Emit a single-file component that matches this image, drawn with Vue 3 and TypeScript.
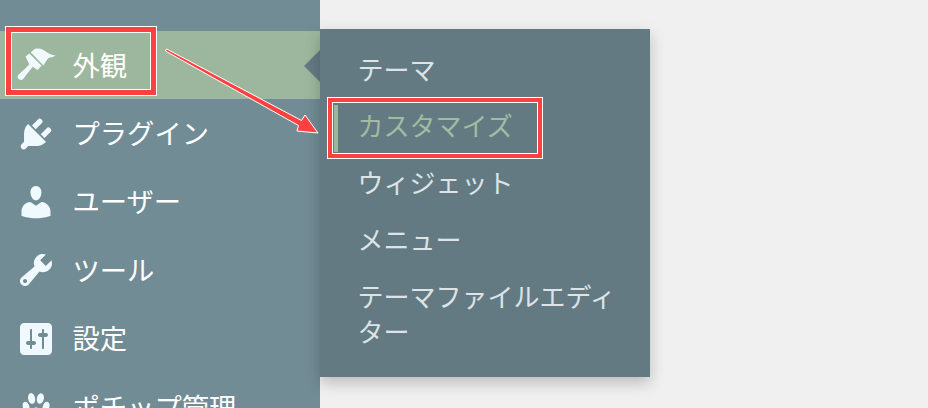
<script setup lang="ts">
interface MenuItem {
  label: string
  icon: string
  active?: boolean
}

const menu: MenuItem[] = [
  {
    label: '外観',
    active: true,
    icon: 'M7.4 3.6L9.3 2C10.6 1.6 12 1.7 13.2 2.2 15.2 3.2 17 5 19.9 5.3 18.6 6.2 17.2 6.2 16.2 6.5 15.2 7.6 14.6 9 13.7 10.3zM6.7 4.3L12.8 10.4 10.7 12.5 8.4 10.9C7 12.5 5.2 15 3.6 17 2.8 17.8 1.7 17.6 1.1 16.8.6 16 .8 15.2 1.5 14.6 3.2 13 5.4 11.2 6.6 9.6L4.8 5.8z'
  },
  {
    label: 'プラグイン',
    icon: 'M13.11 4.36L9.87 7.6 8 5.73l3.24-3.24c.35-.34 1.05-.2 1.56.32.52.51.66 1.21.31 1.55zm-8 1.77l.91-1.12 9.01 9.01-1.19.84c-.71.71-2.63 1.16-3.82 1.16H6.14L4.9 17.26c-.59.59-1.54.59-2.12 0-.59-.58-.59-1.53 0-2.12l1.24-1.24v-3.88c0-1.13.4-3.19 1.09-3.89zm7.26 3.97l3.24-3.24c.34-.35 1.04-.21 1.55.31.52.51.66 1.21.31 1.55l-3.24 3.25z'
  },
  {
    label: 'ユーザー',
    icon: 'M10 9.25c-2.27 0-2.73-3.44-2.73-3.44C7 4.02 7.82 2 9.97 2c2.16 0 2.98 2.02 2.71 3.81 0 0-.41 3.44-2.68 3.44zm0 2.57L12.72 10c2.39 0 4.52 2.33 4.52 4.53v2.49s-3.65 1.13-7.24 1.13c-3.65 0-7.24-1.13-7.24-1.13v-2.49c0-2.25 1.94-4.48 4.47-4.48z'
  },
  {
    label: 'ツール',
    icon: 'M16.68 9.77c-1.34 1.34-3.3 1.67-4.95.99l-5.41 6.52c-.99.99-2.59.99-3.58 0s-.99-2.59 0-3.57l6.52-5.42c-.68-1.65-.35-3.61.99-4.95 1.28-1.28 3.12-1.62 4.72-1.06l-2.89 2.89 2.82 2.82 2.86-2.87c.53 1.58.18 3.39-1.08 4.67zM3.81 16.21c.4.39 1.04.39 1.43 0 .4-.4.4-1.04 0-1.43-.39-.4-1.03-.4-1.43 0-.39.39-.39 1.03 0 1.43z'
  },
  {
    label: '設定',
    icon: 'M18 16V4c0-1.1-.9-2-2-2H4c-1.1 0-2 .9-2 2v12c0 1.1.9 2 2 2h12c1.1 0 2-.9 2-2zM8 11h1c.55 0 1 .45 1 1s-.45 1-1 1H8v1.5c0 .28-.22.5-.5.5s-.5-.22-.5-.5V13H6c-.55 0-1-.45-1-1s.45-1 1-1h1V5.5c0-.28.22-.5.5-.5s.5.22.5.5V11zm5-2h-1c-.55 0-1-.45-1-1s.45-1 1-1h1V5.5c0-.28.22-.5.5-.5s.5.22.5.5V7h1c.55 0 1 .45 1 1s-.45 1-1 1h-1v5.5c0 .28-.22.5-.5.5s-.5-.22-.5-.5V9z'
  },
  {
    label: 'ポチップ管理',
    icon: 'M11.9 8.4c1.3 0 2.1-1.9 2.1-3.1 0-1-.5-2.2-1.5-2.2-1.3 0-2.1 1.9-2.1 3.1 0 1 .5 2.2 1.5 2.2zm-3.8 0c1 0 1.5-1.2 1.5-2.2C9.6 4.9 8.8 3 7.5 3 6.5 3 6 4.2 6 5.2c0 1.3.8 3.2 2.1 3.2zm7.4-1c-1.3 0-2.2 1.8-2.2 3.1 0 .9.4 1.8 1.3 1.8 1.3 0 2.2-1.8 2.2-3.1 0-.9-.5-1.8-1.3-1.8zm-8.7 3.1c0-1.3-1-3.1-2.2-3.1-.9 0-1.3.9-1.3 1.8 0 1.3 1 3.1 2.2 3.1.9 0 1.3-.9 1.3-1.8zm3.2-.2c-2 0-4.7 3.2-4.7 5.4 0 1 .7 1.3 1.5 1.3 1.2 0 2.1-.8 3.2-.8 1 0 1.9.8 3 .8.8 0 1.7-.2 1.7-1.3 0-2.2-2.7-5.4-4.7-5.4z'
  }
]

const submenu = ['テーマ', 'カスタマイズ', 'ウィジェット', 'メニュー', 'テーマファイルエディター']
</script>

<template>
  <div class="page">
    <nav class="sidebar">
      <a v-for="item in menu" :key="item.label" class="row" :class="{ active: item.active }">
        <svg class="icon" viewBox="0 0 20 20" width="40" height="40">
          <path :d="item.icon" />
        </svg>
        <span class="row-text">{{ item.label }}</span>
      </a>
    </nav>

    <ul class="flyout">
      <li v-for="(name, i) in submenu" :key="name" class="sub" :class="{ current: i === 1 }">
        <span class="sub-text">{{ name }}</span>
      </li>
    </ul>

    <div class="mark mark-menu"></div>
    <div class="mark mark-sub"></div>
    <svg class="arrow" viewBox="0 0 928 408" width="928" height="408">
      <polygon
        points="166.6,49 301.5,120.5 305,115 318,133 297,131 298.5,125.5 165.4,51"
        fill="#ff4040"
        stroke="#ffffff"
        stroke-width="1"
        stroke-linejoin="round"
      />
    </svg>
  </div>
</template>

<style>
html,
body {
  margin: 0;
  background: #f0f0f0;
}
</style>

<style scoped>
.page {
  position: relative;
  display: flex;
  align-items: flex-start;
  width: 928px;
  height: 408px;
  overflow: hidden;
  background: #f0f0f0;
  font-family: "Noto Sans CJK JP", "Noto Sans", sans-serif;
}

.sidebar {
  flex: none;
  display: flex;
  flex-direction: column;
  width: 320px;
  height: 480px;
  padding-top: 31px;
  box-sizing: border-box;
  background: #728c95;
}

.row {
  position: relative;
  flex: none;
  display: flex;
  align-items: center;
  gap: 16.5px;
  height: 68.4px;
  padding-left: 16px;
  box-sizing: border-box;
  color: #ffffff;
  font-size: 27.3px;
  line-height: 36px;
  white-space: nowrap;
}

.row-text {
  padding-bottom: 3px;
}

.row.active {
  background: #9db79e;
}

.row.active::after {
  content: "";
  position: absolute;
  top: 19px;
  right: 0;
  border-style: solid;
  border-width: 16px 16px 16px 0;
  border-color: transparent #637a82 transparent transparent;
}

.icon {
  flex: none;
  fill: #f0fafe;
}

.flyout {
  flex: none;
  position: relative;
  width: 330px;
  margin: 29px 0 0;
  padding: 21.75px 0 28.5px;
  box-sizing: border-box;
  list-style: none;
  background: #637a82;
  box-shadow: 0 6px 14px rgba(0, 0, 0, 0.22);
}

.sub {
  margin: 0 0 21.2px 14px;
  padding-left: 23.5px;
  padding-right: 28px;
  color: #dde3e6;
  font-size: 26px;
  line-height: 35.5px;
}

.sub:last-child {
  margin-bottom: 0;
}

.sub.current {
  color: #a2bca2;
  position: relative;
}

.sub.current::before {
  content: "";
  position: absolute;
  left: 0;
  top: -2.5px;
  bottom: -9px;
  width: 4px;
  background: #9db79e;
}

.mark {
  position: absolute;
  box-sizing: border-box;
  border-style: solid;
  border-color: #ff4040;
  outline: 1px solid #ffffff;
  box-shadow: inset 0 0 0 1px #ffffff;
}

.mark-menu {
  left: 6px;
  top: 27px;
  width: 150px;
  height: 68px;
  border-width: 5px;
}

.mark-sub {
  left: 328px;
  top: 98px;
  width: 214px;
  height: 60px;
  border-width: 4px;
}

.arrow {
  position: absolute;
  left: 0;
  top: 0;
  pointer-events: none;
}
</style>
